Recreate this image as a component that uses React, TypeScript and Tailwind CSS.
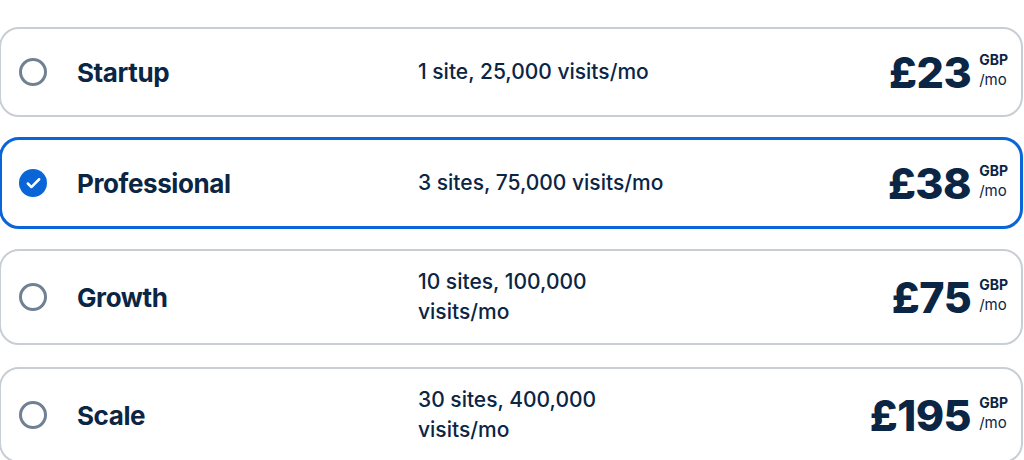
import { Check } from 'lucide-react'

interface Plan {
  name: string
  desc: string
  price: number
  selected?: boolean
}

const plans: Plan[] = [
  { name: 'Startup', desc: '1 site, 25,000 visits/mo', price: 23 },
  { name: 'Professional', desc: '3 sites, 75,000 visits/mo', price: 38, selected: true },
  { name: 'Growth', desc: '10 sites, 100,000 visits/mo', price: 75 },
  { name: 'Scale', desc: '30 sites, 400,000 visits/mo', price: 195 },
]

function Radio({ checked }: { checked?: boolean }) {
  if (checked) {
    return (
      <div className="w-[28px] h-[28px] rounded-full bg-[#0a66d6] flex items-center justify-center">
        <Check size={17} strokeWidth={3.5} className="text-white" />
      </div>
    )
  }
  return <div className="w-[28px] h-[28px] rounded-full border-[3px] border-[#6f8193]" />
}

function PlanCard({ plan }: { plan: Plan }) {
  return (
    <div
      className={
        plan.selected
          ? 'flex items-center rounded-[20px] border-[3px] border-[#0a66d6] bg-white pl-[17px] pr-[12px] py-[15px]'
          : 'flex items-center rounded-[20px] border-2 border-[#c9ced4] bg-white pl-[18px] pr-[13px] py-[15px] last:mt-[2px]'
      }
    >
      <div className="w-[58px] shrink-0">
        <Radio checked={plan.selected} />
      </div>
      <div className="w-[341px] shrink-0 text-[26px] font-bold tracking-[-0.4px]">{plan.name}</div>
      <div className="w-[256px] shrink-0 text-[21px] font-medium leading-[30px] py-[1px]">{plan.desc}</div>
      <div className="ml-auto flex items-start h-[56px] pt-[5px]">
        <span className="text-[43px] font-extrabold leading-[46px] tracking-[-0.5px]">£{plan.price}</span>
        <div className="ml-[8px] flex flex-col pt-[1px]">
          <span className="text-[14px] font-bold leading-[19px]">GBP</span>
          <span className="text-[15px] leading-[22px]">/mo</span>
        </div>
      </div>
    </div>
  )
}

export default function App() {
  return (
    <div
      className="w-[1025px] -ml-[1px] h-[460px] overflow-hidden bg-white text-[#0b2545] pt-[27px] flex flex-col gap-[20px] pr-[1px]"
      style={{ fontFamily: 'Inter, "Noto Sans", sans-serif' }}
    >
      {plans.map(p => (
        <PlanCard key={p.name} plan={p} />
      ))}
    </div>
  )
}
